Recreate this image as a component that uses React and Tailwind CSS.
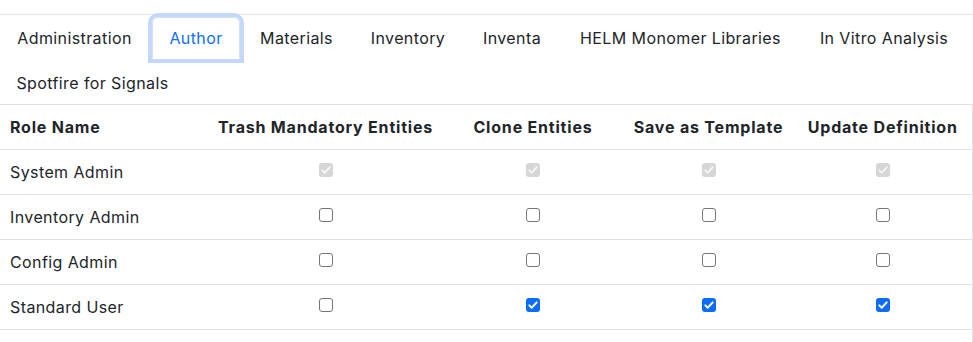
import React from 'react'

const tabs = [
  { label: 'Administration', w: 'w-[149px]' },
  { label: 'Author', w: 'w-[88px]', active: true },
  { label: 'Materials', w: 'w-[107px]' },
  { label: 'Inventory', w: 'w-[110px]' },
  { label: 'Inventa', w: 'w-[92px]' },
  { label: 'HELM Monomer Libraries', w: 'w-[239px]' },
  { label: 'In Vitro Analysis', w: 'w-[162px]' },
  { label: 'Spotfire for Signals', w: 'w-[185px]' },
]

const columns = [
  { label: 'Trash Mandatory Entities', w: 'w-[235px]' },
  { label: 'Clone Entities', w: 'w-[180px]' },
  { label: 'Save as Template', w: 'w-[171px]' },
  { label: 'Update Definition', w: 'w-[178px]' },
]

// 0 = unchecked, 1 = checked, 2 = disabled + checked
const roles = [
  { name: 'System Admin', perms: [2, 2, 2, 2] },
  { name: 'Inventory Admin', perms: [0, 0, 0, 0] },
  { name: 'Config Admin', perms: [0, 0, 0, 0] },
  { name: 'Standard User', perms: [0, 1, 1, 1] },
  { name: '', perms: [0, 0, 0, 0] },
]

function Check({ className }) {
  return (
    <svg viewBox="0 0 14 14" className={className} fill="none">
      <path d="M3.3 7.4l2.4 2.4 5-5.4" stroke="currentColor" strokeWidth="2" strokeLinecap="round" strokeLinejoin="round" />
    </svg>
  )
}

function Checkbox({ state }) {
  if (state === 1) {
    return (
      <span className="flex w-[14px] h-[14px] rounded-[3px] bg-[#0b6cf6] text-white">
        <Check className="w-[14px] h-[14px]" />
      </span>
    )
  }
  if (state === 2) {
    return (
      <span className="flex w-[14px] h-[14px] rounded-[3px] bg-[#d6d6d6] text-[#f4f4f4]">
        <Check className="w-[14px] h-[14px]" />
      </span>
    )
  }
  return <span className="block w-[14px] h-[14px] rounded-[3px] border border-[#767676] bg-white" />
}

export default function App() {
  return (
    <div className="w-[973px] h-[342px] overflow-hidden bg-white text-[#212529] text-base tracking-[0.025em] font-['Inter','Liberation_Sans',sans-serif]">
      {/* Top rule */}
      <div className="h-[15px] border-b border-[#e4e6e9]" />

      {/* Tabs */}
      <nav className="flex flex-wrap gap-x-[3px] gap-y-[3px] pt-[2px]">
        {tabs.map((t) => (
          <div
            key={t.label}
            className={`${t.w} shrink-0 py-2 text-center leading-6 border rounded-t-[6px] whitespace-nowrap ${
              t.active
                ? 'border-[#dee2e6] border-b-white text-[#0d6efd] shadow-[0_0_0_4px_#c2d9fd]'
                : 'border-transparent'
            }`}
          >
            {t.label}
          </div>
        ))}
      </nav>

      {/* Permissions table */}
      <table className="w-[972px] table-fixed border-collapse border-t border-r border-[#dee2e6]">
        <thead>
          <tr className="border-b border-[#dee2e6]">
            <th className="w-[208px] px-[10px] py-[10px] text-left font-bold leading-6 tracking-[0.05em]">Role Name</th>
            {columns.map((c) => (
              <th key={c.label} className={`${c.w} px-[10px] py-[10px] text-center font-bold leading-6 tracking-[0.05em] whitespace-nowrap`}>
                {c.label}
              </th>
            ))}
          </tr>
        </thead>
        <tbody>
          {roles.map((r, idx) => (
            <tr key={idx} className="border-b border-[#dee2e6]">
              <td className="px-[10px] py-[10px] h-[45px] leading-6">{r.name}</td>
              {r.perms.map((p, i) => (
                <td key={i} className="px-[10px] pt-[9px] pb-[10px] align-top">
                  <div className="flex h-[21px] items-center justify-center">
                    <Checkbox state={p} />
                  </div>
                </td>
              ))}
            </tr>
          ))}
        </tbody>
      </table>
    </div>
  )
}
